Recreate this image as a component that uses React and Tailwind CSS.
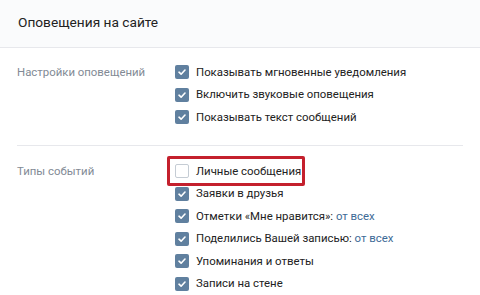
import React from 'react';

const font = { fontFamily: 'Roboto, "Noto Sans", sans-serif' };

function Check({ checked = true }) {
    if (!checked) {
        return <span className="w-[14px] h-[14px] rounded-[2px] border border-[#c5ccd4] bg-white flex-shrink-0" />;
    }
    return (
        <span className="w-[14px] h-[14px] rounded-[2px] bg-[#60809f] flex items-center justify-center flex-shrink-0">
            <svg width="10" height="10" viewBox="0 0 10 10" fill="none">
                <path d="M2 5.2 L4.1 7.2 L8 3" stroke="#fff" strokeWidth="1.6" strokeLinecap="round" strokeLinejoin="round" />
            </svg>
        </span>
    );
}

function Row({ children, checked, suffix }) {
    return (
        <div className="flex items-center gap-[7px] h-[22.6px]">
            <Check checked={checked} />
            <span className="text-[#222] whitespace-nowrap">
                {children}
                {suffix && <span className="text-[#3d6a96]">{suffix}</span>}
            </span>
        </div>
    );
}

export default function App() {
    return (
        <div className="w-[480px] h-[295px] bg-white overflow-hidden text-[11.4px]" style={font}>
            <div className="h-[48px] bg-[#fafbfc] border-b border-[#e7e8ec] flex items-center px-[18px] pb-[2px]">
                <h2 className="text-[13.7px] text-[#222]">Оповещения на сайте</h2>
            </div>

            <div className="px-[17px]">
                <div className="flex pt-[13px] pb-[16px] border-b border-[#e7e8ec] w-[446px]">
                    <div className="w-[158px] text-[#828a95] leading-[22.6px]">Настройки оповещений</div>
                    <div className="flex flex-col">
                        <Row>Показывать мгновенные уведомления</Row>
                        <Row>Включить звуковые оповещения</Row>
                        <Row>Показывать текст сообщений</Row>
                    </div>
                </div>

                <div className="flex pt-[14px]">
                    <div className="w-[158px] text-[#828a95] leading-[22.6px]">Типы событий</div>
                    <div className="flex flex-col">
                        <div className="relative">
                            <div className="absolute left-[-8px] top-[-4px] w-[138px] h-[30px] border-[3px] border-[#c4202d] rounded-[2px]" />
                            <Row checked={false}>Личные сообщения</Row>
                        </div>
                        <Row>Заявки в друзья</Row>
                        <Row suffix="от всех">Отметки «Мне нравится»: </Row>
                        <Row suffix="от всех">Поделились Вашей записью: </Row>
                        <Row>Упоминания и ответы</Row>
                        <Row>Записи на стене</Row>
                    </div>
                </div>
            </div>
        </div>
    );
}
